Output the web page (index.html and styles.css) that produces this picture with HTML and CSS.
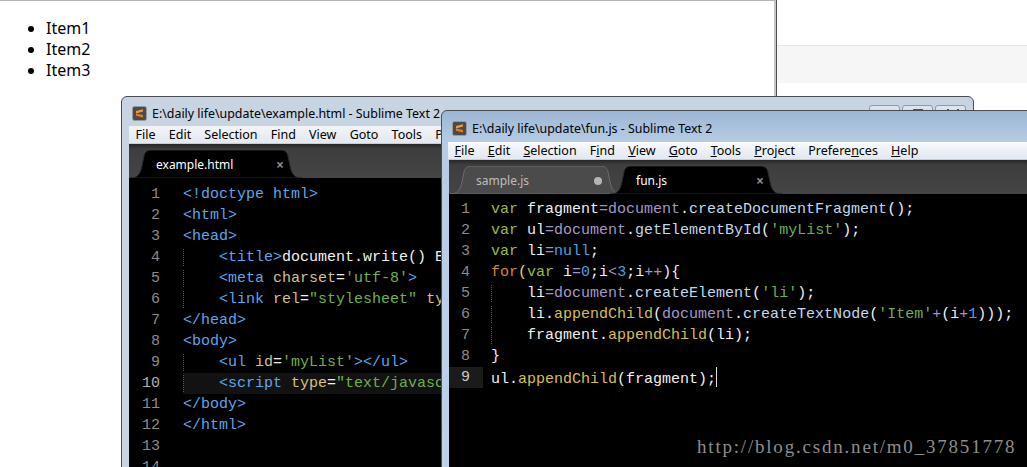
FILE: index.html
```html
<!DOCTYPE html>
<html lang="en">
<head>
  <meta charset="UTF-8">
  <title>document.write() Example</title>
  <link rel="stylesheet" href="styles.css">
</head>
<body>

  <div class="screen">
    <div class="page">
      <ul class="items">
        <li>Item1</li>
        <li>Item2</li>
        <li>Item3</li>
      </ul>
    </div>
    <div class="side">
      <div class="band"></div>
    </div>
  </div>

  <!-- back window: example.html -->
  <div class="win win-back">
    <div class="titlebar">
      <svg class="logo" width="15" height="15" viewBox="0 0 15 15">
        <rect x="0.5" y="0.5" width="14" height="14" rx="2" fill="#4b4b4b" stroke="#9a9a9a"/>
        <path d="M4 5 L11 3.2 V5.6 L4 7.4 Z" fill="#f39b2f"/>
        <path d="M4 7.4 L11 9 V11.4 L4 9.8 Z" fill="#e27e17"/>
      </svg>
      <span class="title">E:\daily life\update\example.html - Sublime Text 2</span>
      <div class="ctrls"><span></span><span class="max"></span><span class="close"></span></div>
    </div>
    <div class="menubar">
      <span>File</span><span>Edit</span><span>Selection</span><span>Find</span><span>View</span><span>Goto</span><span>Tools</span><span>Project</span><span>Preferences</span><span>Help</span>
    </div>
    <div class="tabbar">
      <div class="tab active">
        <svg class="tab-bg" width="172" height="28" viewBox="0 0 172 28"><path d="M0 28 C8 28 10 24 12 16 L14 6 C15 2 17 0 22 0 H150 C155 0 157 2 158 6 L160 16 C162 24 164 28 172 28 Z"/></svg>
        <span class="tab-name">example.html</span><span class="tab-x">×</span>
      </div>
    </div>
    <div class="editor">
      <div class="ln"><span class="no">1</span><span class="src"><span class="t">&lt;!doctype html&gt;</span></span></div>
      <div class="ln"><span class="no">2</span><span class="src"><span class="t">&lt;html&gt;</span></span></div>
      <div class="ln"><span class="no">3</span><span class="src"><span class="t">&lt;head&gt;</span></span></div>
      <div class="ln"><span class="no">4</span><span class="src"><span class="ind">    </span><span class="t">&lt;title&gt;</span>document.write() Example<span class="t">&lt;/title&gt;</span></span></div>
      <div class="ln"><span class="no">5</span><span class="src"><span class="ind">    </span><span class="t">&lt;meta</span> <span class="a">charset</span>=<span class="s">'utf-8'</span><span class="t">&gt;</span></span></div>
      <div class="ln"><span class="no">6</span><span class="src"><span class="ind">    </span><span class="t">&lt;link</span> <span class="a">rel</span>=<span class="s">"stylesheet"</span> <span class="a">type</span>=<span class="s">"text/css"</span><span class="t">&gt;</span></span></div>
      <div class="ln"><span class="no">7</span><span class="src"><span class="t">&lt;/head&gt;</span></span></div>
      <div class="ln"><span class="no">8</span><span class="src"><span class="t">&lt;body&gt;</span></span></div>
      <div class="ln"><span class="no">9</span><span class="src"><span class="ind">    </span><span class="t">&lt;ul</span> <span class="a">id</span>=<span class="s">'myList'</span><span class="t">&gt;&lt;/ul&gt;</span></span></div>
      <div class="ln cur"><span class="no">10</span><span class="src"><span class="ind">    </span><span class="t">&lt;script</span> <span class="a">type</span>=<span class="s">"text/javascript"</span> <span class="a">src</span>=<span class="s">"fun.js"</span><span class="t">&gt;&lt;/script&gt;</span></span></div>
      <div class="ln"><span class="no">11</span><span class="src"><span class="t">&lt;/body&gt;</span></span></div>
      <div class="ln"><span class="no">12</span><span class="src"><span class="t">&lt;/html&gt;</span></span></div>
      <div class="ln"><span class="no">13</span><span class="src"></span></div>
      <div class="ln"><span class="no">14</span><span class="src"></span></div>
    </div>
  </div>

  <!-- front window: fun.js -->
  <div class="win win-front">
    <div class="titlebar">
      <svg class="logo" width="15" height="15" viewBox="0 0 15 15">
        <rect x="0.5" y="0.5" width="14" height="14" rx="2" fill="#4b4b4b" stroke="#9a9a9a"/>
        <path d="M4 5 L11 3.2 V5.6 L4 7.4 Z" fill="#f39b2f"/>
        <path d="M4 7.4 L11 9 V11.4 L4 9.8 Z" fill="#e27e17"/>
      </svg>
      <span class="title">E:\daily life\update\fun.js - Sublime Text 2</span>
    </div>
    <div class="menubar">
      <span><u>F</u>ile</span><span><u>E</u>dit</span><span><u>S</u>election</span><span>F<u>i</u>nd</span><span><u>V</u>iew</span><span><u>G</u>oto</span><span><u>T</u>ools</span><span><u>P</u>roject</span><span>Prefere<u>n</u>ces</span><span><u>H</u>elp</span>
    </div>
    <div class="tabbar">
      <div class="tab">
        <svg class="tab-bg" width="172" height="28" viewBox="0 0 172 28"><path d="M0 28 C8 28 10 24 12 16 L14 6 C15 2 17 0 22 0 H150 C155 0 157 2 158 6 L160 16 C162 24 164 28 172 28 Z"/></svg>
        <span class="tab-name">sample.js</span><span class="tab-dot"></span>
      </div>
      <div class="tab active">
        <svg class="tab-bg" width="172" height="28" viewBox="0 0 172 28"><path d="M0 28 C8 28 10 24 12 16 L14 6 C15 2 17 0 22 0 H150 C155 0 157 2 158 6 L160 16 C162 24 164 28 172 28 Z"/></svg>
        <span class="tab-name">fun.js</span><span class="tab-x">×</span>
      </div>
    </div>
    <div class="editor">
      <div class="ln"><span class="no">1</span><span class="src"><span class="k">var</span> fragment<span class="o">=</span><span class="d">document</span>.<span class="m">createDocumentFragment</span>();</span></div>
      <div class="ln"><span class="no">2</span><span class="src"><span class="k">var</span> ul<span class="o">=</span><span class="d">document</span>.<span class="m">getElementById</span>(<span class="s">'myList'</span>);</span></div>
      <div class="ln"><span class="no">3</span><span class="src"><span class="k">var</span> li<span class="o">=</span><span class="n">null</span>;</span></div>
      <div class="ln"><span class="no">4</span><span class="src"><span class="f">for</span><span class="y">(</span><span class="k">var</span> i<span class="o">=</span><span class="n">0</span>;i<span class="o">&lt;</span><span class="n">3</span>;i<span class="o">++</span>){</span></div>
      <div class="ln"><span class="no">5</span><span class="src"><span class="ind">    </span>li<span class="o">=</span><span class="d">document</span>.<span class="m">createElement</span>(<span class="s">'li'</span>);</span></div>
      <div class="ln"><span class="no">6</span><span class="src"><span class="ind">    </span>li.<span class="ap">appendChild</span>(<span class="d">document</span>.<span class="m">createTextNode</span>(<span class="s">'Item'</span><span class="o">+</span>(i<span class="o">+</span><span class="n">1</span>)));</span></div>
      <div class="ln"><span class="no">7</span><span class="src"><span class="ind">    </span>fragment.<span class="ap">appendChild</span>(li);</span></div>
      <div class="ln"><span class="no">8</span><span class="src">}</span></div>
      <div class="ln cur"><span class="no">9</span><span class="src">ul.<span class="ap">appendChild</span>(fragment);<span class="caret"></span></span></div>
    </div>
  </div>

  <div class="watermark">http://blog.csdn.net/m0_37851778</div>

</body>
</html>
```

FILE: styles.css
```css
* {
  box-sizing: border-box;
}

body {
  margin: 0;
  width: 1027px;
  height: 467px;
  overflow: hidden;
  position: relative;
  background: #fff;
  font-family: "Noto Sans", sans-serif;
}

/* browser page behind the editors */
.screen {
  display: flex;
  height: 467px;
}

.page {
  width: 776px;
  border-top: 1px solid #b4b4b4;
  border-right: 2px solid #c6c6c6;
}

.side {
  flex: 1;
  border-left: 1px solid #4d4d4d;
  padding-top: 45px;
}

.band {
  height: 38px;
  background: #f6f6f6;
  border-top: 1px solid #e6e6e6;
}

.items {
  margin: 17px 0 0;
  padding-left: 46px;
  font-size: 16px;
  line-height: 21px;
  color: #000;
}

/* sublime windows */
.win {
  position: absolute;
  border: 1px solid #4a4e54;
  border-radius: 6px 6px 0 0;
  padding: 0 7px;
  display: flex;
  flex-direction: column;
}

.win-back {
  left: 121px;
  top: 96px;
  width: 853px;
  height: 380px;
  background: #c7d4e1;
}

.win-front {
  left: 441px;
  top: 110px;
  width: 600px;
  height: 370px;
  background: linear-gradient(#9bb6d4, #b6cce4 31px, #bcd2ea);
}

.titlebar {
  height: 29px;
  flex: none;
  display: flex;
  align-items: center;
  gap: 5px;
  padding: 3px 0 0 3px;
  font-size: 12.4px;
  color: #000;
  white-space: nowrap;
}

.win-front .titlebar {
  height: 31px;
}

.logo {
  flex: none;
}

.ctrls {
  margin-left: auto;
  align-self: flex-start;
  margin-top: 5px;
  display: flex;
  gap: 2px;
}

.ctrls span {
  width: 31px;
  height: 19px;
  border: 1px solid #8c9aab;
  border-radius: 3px;
  background: linear-gradient(#dde6ef, #c9d6e3);
  position: relative;
}

.ctrls .max::after {
  content: "";
  position: absolute;
  left: 10px;
  top: 3px;
  width: 10px;
  height: 2px;
  background: #4a5563;
}

.ctrls .close::after {
  content: "";
  position: absolute;
  left: 11px;
  top: 3px;
  width: 8px;
  height: 2px;
  border-left: 2px solid #4a5563;
  border-right: 2px solid #4a5563;
}

.menubar {
  height: 18px;
  flex: none;
  display: flex;
  background: linear-gradient(#f8fafd, #e2e8f1);
  border-bottom: 1px solid #c5cdd9;
  font-size: 12.5px;
  line-height: 17px;
  color: #000;
  white-space: nowrap;
}

.menubar span {
  padding: 0 6.6px;
}

.win-front .menubar {
  padding-left: 0;
  margin-left: -1px;
}

.win-back .menubar {
  background: linear-gradient(#f2f4f8, #e4e8ef);
}

.menubar u {
  text-underline-offset: 1px;
}

.tabbar {
  height: 34px;
  flex: none;
  display: flex;
  align-items: flex-end;
  padding-left: 1px;
  background: linear-gradient(#262626, #3e3e3e 5px, #444 34px);
}

.tab {
  position: relative;
  width: 172px;
  height: 28px;
  display: flex;
  align-items: center;
  padding: 1px 18px 0 26px;
  font-size: 12px;
  color: #bdbdbd;
}

.tab + .tab {
  margin-left: -12px;
}

.tab-bg {
  position: absolute;
  left: 0;
  top: 0;
}

.tab-bg path {
  fill: #4b4b4b;
  stroke: #6c6c6c;
  stroke-width: 1;
}

.tab.active .tab-bg path {
  fill: #000;
  stroke: #2a2a2a;
}

.tab.active {
  color: #fff;
  z-index: 1;
}

.tab-name {
  position: relative;
  flex: 1;
}

.tab-x {
  position: relative;
  color: #8a8a8a;
  font-size: 14px;
  font-weight: bold;
}

.tab-dot {
  position: relative;
  width: 8px;
  height: 8px;
  margin-right: 2px;
  border-radius: 50%;
  background: #b5b5b5;
}

/* code */
.editor {
  flex: 1;
  background: #000;
  padding-top: 6px;
  font-family: "Liberation Mono", monospace;
  font-size: 15px;
  line-height: 21px;
  color: #f0f0f0;
  overflow: hidden;
}

.win-front .editor {
  padding-top: 5px;
}

.ln {
  display: flex;
  height: 21px;
  white-space: pre;
}

.no {
  flex: none;
  text-align: right;
  color: #8c8c8c;
}

.win-back .no {
  width: 45px;
  padding-right: 14px;
  margin-right: 9px;
}

.win-front .no {
  width: 34px;
  padding-right: 13px;
  margin-right: 8px;
}

.src {
  flex: 1;
}

.win-back .ln.cur .src {
  background: #121212;
}

.win-back .ln.cur .no {
  color: #b0b0b0;
}

.win-front .ln.cur .no {
  background: #1b1b1b;
  color: #c8c8c8;
}

.ind {
  background-image: linear-gradient(#5a5a5a 50%, transparent 50%);
  background-size: 1px 2px;
  background-repeat: repeat-y;
}

.caret {
  display: inline-block;
  width: 1px;
  height: 20px;
  vertical-align: -4px;
  background: #e0e0e0;
}

.t { color: #5ea6ec; }
.a { color: #d3c185; }
.s { color: #6fb04a; }
.k { color: #9dbb3f; }
.f { color: #d8873f; }
.y { color: #e6d58a; }
.o { color: #a092c6; }
.d { color: #a598c9; }
.m { color: #c3d8ec; }
.ap { color: #d9bf4d; }
.n { color: #4da2e6; }

.watermark {
  position: absolute;
  left: 697px;
  top: 436px;
  font-family: "Liberation Serif", serif;
  font-size: 19px;
  letter-spacing: 1.8px;
  color: #8e8e8e;
}
```
